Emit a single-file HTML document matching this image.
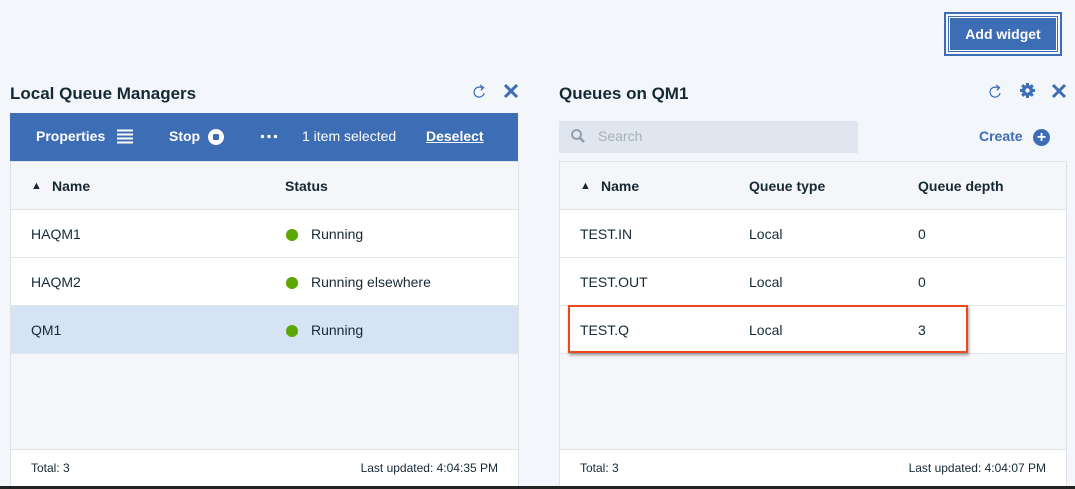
<!DOCTYPE html>
<html><head><style>
*{box-sizing:border-box;margin:0;padding:0}
body{width:1075px;height:489px;background:#f3f6fa;font-family:"Liberation Sans",sans-serif;color:#152935;position:relative;overflow:hidden;font-size:14px}
.a{position:absolute}
.title{font-size:17px;font-weight:bold;color:#152935}
.panel{position:absolute;top:161px;height:326px;border:1px solid #dfe3e6;background:#f4f6f9}
.row{position:absolute;left:0;right:0;height:48px;background:#fff;border-bottom:1px solid #e4e8ec}
.row span,.hd span{position:absolute;top:16px}
.hd{position:absolute;left:0;right:0;top:0;height:48px;background:#f4f6f9;border-bottom:1px solid #e0e4e8;font-weight:bold}
.foot{position:absolute;left:0;right:0;bottom:0;height:37px;background:#fff;border-top:1px solid #e0e4e8;font-size:12px}
.foot span{position:absolute;top:11px}
.dot{position:absolute;top:19px;width:12px;height:12px;border-radius:50%;background:#5aa700}
</style></head><body>
<div class="a" style="left:944px;top:12px;width:118px;height:44px;border:2px solid #3d6db5;padding:2px"><div style="background:#3d6db5;height:100%;color:#fff;font-weight:bold;font-size:14px;text-align:center;line-height:36px;outline:1px solid #fff;outline-offset:-2px">Add widget</div></div>

<div class="a title" style="left:10px;top:84px">Local Queue Managers</div>
<svg class="a" style="left:472px;top:83px" width="14" height="16" viewBox="0 0 14 16"><path d="M11 6A5 5 0 1 0 12 10" fill="none" stroke="#3d6db5" stroke-width="1.2"/><path d="M8 2L11.5 4.5L9 7.5" fill="none" stroke="#3d6db5" stroke-width="1.2"/></svg>
<svg class="a" style="left:503px;top:83px" width="16" height="16"><path d="M2 2L14 14M14 2L2 14" stroke="#3d6db5" stroke-width="3"/></svg>

<div class="a" style="left:10px;top:113px;width:508px;height:48px;background:#3d6db5;color:#fff;font-size:14px">
<span class="a" style="left:26px;top:15px;font-weight:bold">Properties</span>
<svg class="a" style="left:107px;top:16px" width="16" height="15"><path d="M0 1.5H16M0 5.5H16M0 9.5H16M0 13.5H16" stroke="#fff" stroke-width="2"/></svg>
<span class="a" style="left:159px;top:15px;font-weight:bold">Stop</span>
<div class="a" style="left:198px;top:16px;width:16px;height:16px;border-radius:50%;background:#fff"><div class="a" style="left:5px;top:5px;width:6px;height:6px;background:#3d6db5;border-radius:1px"></div></div>
<svg class="a" style="left:250px;top:21px" width="18" height="5"><circle cx="2.5" cy="2.5" r="1.7" fill="#fff"/><circle cx="9" cy="2.5" r="1.7" fill="#fff"/><circle cx="15.5" cy="2.5" r="1.7" fill="#fff"/></svg>
<span class="a" style="left:292px;top:15px">1 item selected</span>
<span class="a" style="left:416px;top:15px;font-weight:bold;text-decoration:underline">Deselect</span>
</div>

<div class="panel" style="left:10px;width:509px">
<div class="hd"><span style="left:20px;font-size:11px;top:18px">▲</span><span style="left:41px">Name</span><span style="left:274px">Status</span></div>
<div class="row" style="top:48px"><span style="left:20px">HAQM1</span><div class="dot" style="left:275px"></div><span style="left:300px">Running</span></div>
<div class="row" style="top:96px"><span style="left:20px">HAQM2</span><div class="dot" style="left:275px"></div><span style="left:300px">Running elsewhere</span></div>
<div class="row" style="top:144px;background:#d5e3f4"><span style="left:20px">QM1</span><div class="dot" style="left:275px"></div><span style="left:300px">Running</span></div>
<div class="foot"><span style="left:20px">Total: 3</span><span style="right:20px">Last updated: 4:04:35 PM</span></div>
</div>

<div class="a title" style="left:559px;top:84px">Queues on QM1</div>
<svg class="a" style="left:988px;top:83px" width="14" height="16" viewBox="0 0 14 16"><path d="M11 6A5 5 0 1 0 12 10" fill="none" stroke="#3d6db5" stroke-width="1.2"/><path d="M8 2L11.5 4.5L9 7.5" fill="none" stroke="#3d6db5" stroke-width="1.2"/></svg>
<svg class="a" style="left:1019px;top:82px" width="17" height="17" viewBox="0 0 17 17"><circle cx="8.5" cy="8.5" r="5.5" fill="#3d6db5"/><path d="M8.5 1V16M1 8.5H16M3.2 3.2L13.8 13.8M13.8 3.2L3.2 13.8" stroke="#3d6db5" stroke-width="3"/><circle cx="8.5" cy="8.5" r="2.2" fill="#f3f6fa"/></svg>
<svg class="a" style="left:1051px;top:83px" width="16" height="16"><path d="M2 2L14 14M14 2L2 14" stroke="#3d6db5" stroke-width="3"/></svg>

<div class="a" style="left:559px;top:121px;width:299px;height:32px;background:#dfe6ef"></div>
<svg class="a" style="left:570px;top:128px" width="18" height="18"><circle cx="6.5" cy="6.5" r="4.5" fill="none" stroke="#8c9ba5" stroke-width="1.8"/><path d="M10 10L14 14" stroke="#8c9ba5" stroke-width="2.5"/></svg>
<span class="a" style="left:598px;top:128px;color:#a5b0b8">Search</span>
<span class="a" style="left:979px;top:128px;color:#3d6db5;font-weight:bold">Create</span>
<div class="a" style="left:1033px;top:129px;width:17px;height:17px;border-radius:50%;background:#3d6db5;color:#fff;font-weight:bold;text-align:center;line-height:17px;font-size:16px">+</div>

<div class="panel" style="left:559px;width:508px">
<div class="hd"><span style="left:20px;font-size:11px;top:18px">▲</span><span style="left:41px">Name</span><span style="left:189px">Queue type</span><span style="left:358px">Queue depth</span></div>
<div class="row" style="top:48px"><span style="left:20px">TEST.IN</span><span style="left:189px">Local</span><span style="left:358px">0</span></div>
<div class="row" style="top:96px"><span style="left:20px">TEST.OUT</span><span style="left:189px">Local</span><span style="left:358px">0</span></div>
<div class="row" style="top:144px"><span style="left:20px">TEST.Q</span><span style="left:189px">Local</span><span style="left:358px">3</span></div>
<div class="foot"><span style="left:20px">Total: 3</span><span style="right:20px">Last updated: 4:04:07 PM</span></div>
</div>
<div class="a" style="left:568px;top:305px;width:400px;height:48px;border:2px solid #f0461e;box-shadow:1px 2px 3px rgba(0,0,0,.4)"></div>
<div class="a" style="left:0;top:486px;width:1075px;height:3px;background:#222"></div>
</body></html>
